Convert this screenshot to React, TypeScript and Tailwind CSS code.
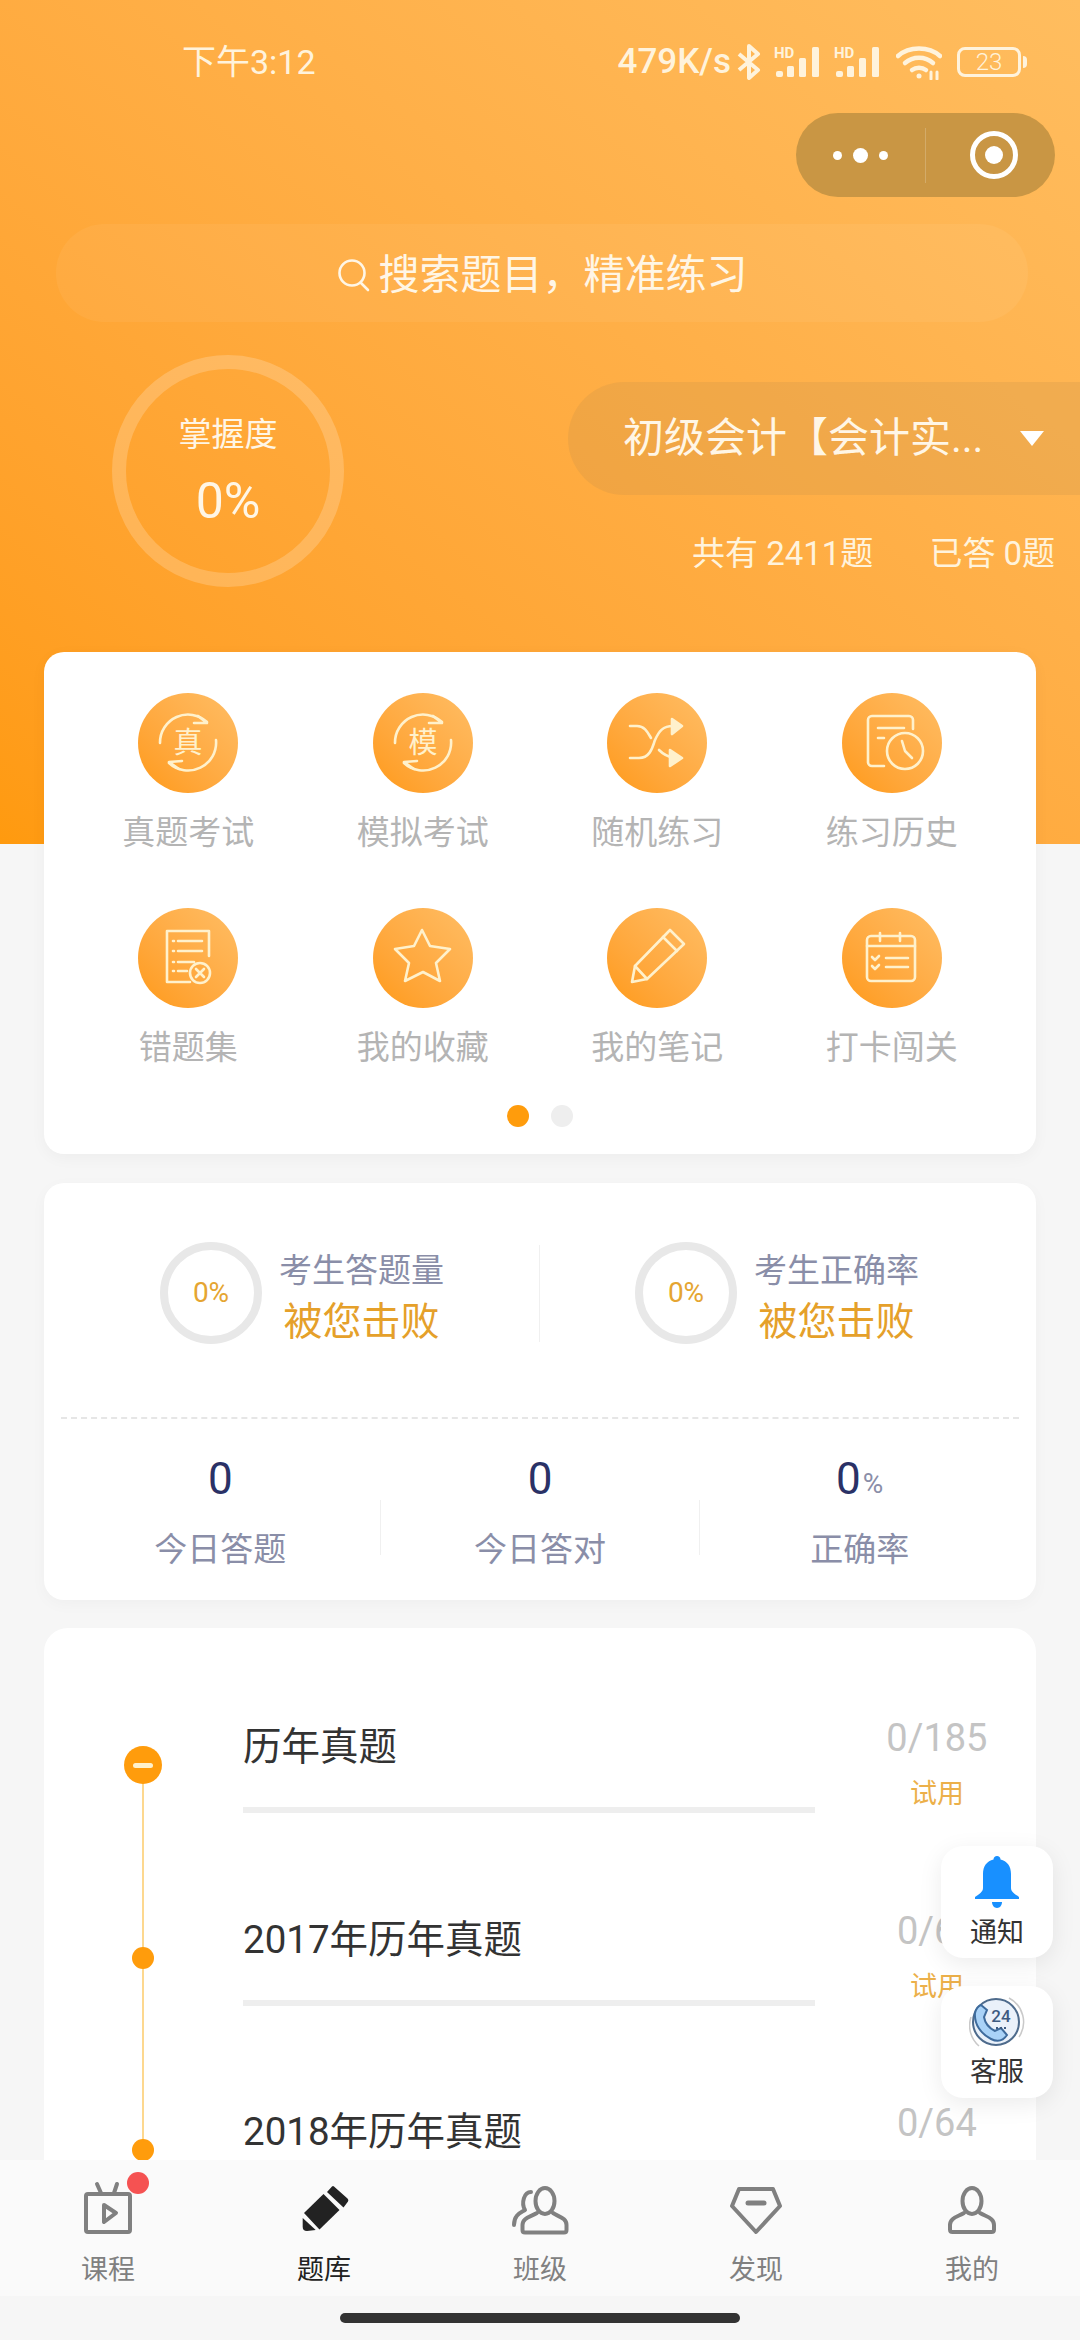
import type { ReactNode } from 'react';

const cream = '#fff1cc';

const IconLine = ({ children }: { children: ReactNode }) => (
	<svg viewBox="0 0 100 100" className="h-[100px] w-[100px]" fill="none" stroke={cream} strokeWidth="2.6" strokeLinecap="round" strokeLinejoin="round">
		{children}
	</svg>
);

const CharCycle = ({ char }: { char: string }) => (
	<IconLine>
		<path d="M22 50A28 28 0 0 1 69 29" />
		<path d="M60 23L69 30L56 30" />
		<path d="M78 47A28 28 0 0 1 31 70" />
		<path d="M41 76L31 69L44 68" />
		<text x="50" y="60" textAnchor="middle" fontSize="29" fill={cream} stroke="none" fontFamily="Noto Sans CJK SC">{char}</text>
	</IconLine>
);

const menu: { label: string; icon: ReactNode }[] = [
	{ label: '真题考试', icon: <CharCycle char="真" /> },
	{ label: '模拟考试', icon: <CharCycle char="模" /> },
	{
		label: '随机练习',
		icon: (
			<IconLine>
				<path d="M23 33H30C38 33 41 40 44 45" />
				<path d="M23 65H32C44 65 46 52 48 47C52 38 56 33 66 33" />
				<path d="M52 57C55 60 58 63 66 64.5" />
				<path d="M65 26L75 33L65 41Z" fill={cream} />
				<path d="M63 57L75 65L63 73Z" fill={cream} />
			</IconLine>
		),
	},
	{
		label: '练习历史',
		icon: (
			<IconLine>
				<path d="M71 36V27A4 4 0 0 0 67 23H30A4 4 0 0 0 26 27V69A4 4 0 0 0 30 73H42" />
				<path d="M36 35H62M36 45H42" />
				<circle cx="63" cy="58" r="18" />
				<path d="M60 48L63 58L70 65" />
			</IconLine>
		),
	},
	{
		label: '错题集',
		icon: (
			<IconLine>
				<path d="M71 48V23H29V74H52" />
				<path d="M35 33H36M40 33H64M35 43H36M40 43H64M35 54H36M40 54H56M35 63H36M40 63H49" />
				<circle cx="62" cy="65" r="10" />
				<path d="M58 61L66 69M66 61L58 69" />
			</IconLine>
		),
	},
	{
		label: '我的收藏',
		icon: (
			<IconLine>
				<path d="M49 22L57 38L77 41L63 55L67 73L50 64L32 73L36 55L22 41L41 38Z" />
			</IconLine>
		),
	},
	{
		label: '我的笔记',
		icon: (
			<IconLine>
				<path d="M63 22L77 36L40 71L25 74L28 58Z" />
				<path d="M28 58L40 71M56 29L70 43" />
			</IconLine>
		),
	},
	{
		label: '打卡闯关',
		icon: (
			<IconLine>
				<rect x="25" y="28" width="48" height="45" rx="4" />
				<path d="M25 38H73M38 25V33M58 25V33" />
				<path d="M30 49L33 52L37 48M30 58L33 61L37 57" />
				<path d="M44 50H66M44 59H66" />
			</IconLine>
		),
	},
];

const Signal = () => (
	<svg viewBox="0 0 49 32" className="h-[32px] w-[49px] overflow-visible" fill="#fff3dc">
		<text x="0" y="12" fontSize="15" fontWeight="700" fontFamily="Roboto">HD</text>
		<rect x="2" y="25" width="7" height="6" rx="2" />
		<rect x="13" y="20" width="7" height="11" rx="1.5" />
		<rect x="25" y="12" width="7" height="19" rx="1.5" />
		<rect x="38" y="1" width="7" height="30" rx="1.5" />
	</svg>
);

const StatusBar = () => (
	<div className="flex h-[113px] items-start justify-between pt-[40px] pl-[182px] pr-[53px] text-[#fff3dc]">
		<span className="text-[34px] leading-[44px]">下午3:12</span>
		<div className="flex h-[44px] items-center">
			<span className="text-[35px] font-medium">479K/s</span>
			<svg viewBox="0 0 26 36" className="ml-[5px] h-[36px] w-[26px]" fill="none" stroke="#fff3dc" strokeWidth="4" strokeLinejoin="round">
				<path d="M3 10L22 26L13 34V2L22 10L3 26" />
			</svg>
			<div className="ml-[12px]"><Signal /></div>
			<div className="ml-[11px]"><Signal /></div>
			<svg viewBox="0 0 46 36" className="ml-[13px] h-[36px] w-[46px]" fill="none" stroke="#fff3dc" strokeWidth="4.5" strokeLinecap="round">
				<path d="M2 12C13 2 33 2 44 12" />
				<path d="M9 19C17 12 29 12 37 19" />
				<path d="M16 26C20 23 26 23 30 26" />
				<circle cx="23" cy="32" r="2.5" fill="#fff3dc" stroke="none" />
				<path d="M35 28V35M41 28V35" strokeWidth="3" />
			</svg>
			<div className="ml-[15px] flex items-center">
				<div className="flex h-[30px] w-[64px] items-center justify-center rounded-[8px] border-[3px] border-[#fff3dc] text-[24px] leading-none font-light">23</div>
				<div className="ml-[2px] h-[12px] w-[4px] rounded-r-full bg-[#fff3dc]" />
			</div>
		</div>
	</div>
);

const Capsule = () => (
	<div className="flex justify-end pr-[25px]">
		<div className="flex h-[84px] w-[259px] items-center rounded-full bg-[#c99644]">
			<div className="flex w-[129px] items-center justify-center gap-[11px]">
				<span className="h-[9px] w-[9px] rounded-full bg-white" />
				<span className="h-[15px] w-[15px] rounded-full bg-white" />
				<span className="h-[9px] w-[9px] rounded-full bg-white" />
			</div>
			<div className="h-[55px] w-px bg-white/20" />
			<div className="flex flex-1 items-center justify-center pl-[6px]">
				<div className="flex h-[48px] w-[48px] items-center justify-center rounded-full border-[5px] border-white">
					<span className="h-[18px] w-[18px] rounded-full bg-white" />
				</div>
			</div>
		</div>
	</div>
);

const Header = () => (
	<div className="h-[844px] bg-linear-to-tr from-[#ff9a0e] to-[#ffbd5f]">
		<StatusBar />
		<Capsule />
		<div className="mt-[27px] ml-[56px] mr-[52px] flex h-[98px] items-center justify-center rounded-full bg-white/5 pt-[4px] text-[#fff6e6]">
			<svg viewBox="0 0 34 34" className="h-[34px] w-[34px]" fill="none" stroke="#fff6e6" strokeWidth="2.6" strokeLinecap="round">
				<circle cx="15" cy="15" r="12.5" />
				<path d="M24 25L31 32" />
			</svg>
			<span className="ml-[8px] text-[41px] leading-none">搜索题目，精准练习</span>
		</div>
		<div className="mt-[33px] flex items-start">
			<div className="ml-[112px] flex h-[232px] w-[232px] flex-col items-center justify-center rounded-full border-[14px] border-white/20 text-[#fff6e6]">
				<span className="text-[33px] leading-[44px]">掌握度</span>
				<span className="mt-[16px] text-[50px] leading-[56px]">0%</span>
			</div>
			<div className="ml-[224px] mt-[27px] flex-1">
				<div className="flex h-[113px] items-center rounded-l-full bg-[#b98a4a]/20 pl-[55px] text-[#fff6e6]">
					<span className="text-[41px] leading-none">初级会计【会计实...</span>
					<span className="ml-[37px] h-0 w-0 border-x-[12px] border-t-[15px] border-x-transparent border-t-white" />
				</div>
				<div className="mt-[40px] flex text-[33px] leading-[38px] text-[#fff3dc]">
					<span className="ml-[124px]">共有 2411题</span>
					<span className="ml-[56px]">已答 0题</span>
				</div>
			</div>
		</div>
	</div>
);

const MenuCard = () => (
	<div className="relative mx-[44px] -mt-[192px] h-[502px] rounded-[20px] bg-white px-[27px] pt-[41px] shadow-[0_4px_16px_rgba(0,0,0,0.04)]">
		<div className="grid grid-cols-4 gap-y-[53px]">
			{menu.map((m) => (
				<div key={m.label} className="flex flex-col items-center">
					<div className="h-[100px] w-[100px] rounded-full bg-linear-to-tr from-[#ff9a12] to-[#ffbd63]">{m.icon}</div>
					<span className="mt-[18px] text-[33px] leading-[44px] text-[#b4b4b4]">{m.label}</span>
				</div>
			))}
		</div>
		<div className="mt-[35px] flex justify-center gap-[22px]">
			<span className="h-[22px] w-[22px] rounded-full bg-[#ff9c0c]" />
			<span className="h-[22px] w-[22px] rounded-full bg-[#eeeeee]" />
		</div>
	</div>
);

const Beat = ({ title, className }: { title: string; className: string }) => (
	<div className={`flex items-center justify-center ${className}`}>
		<div className="flex h-[102px] w-[102px] items-center justify-center rounded-full border-[8px] border-[#e8e8e8] text-[28px] text-[#e5a531]">0%</div>
		<div className="ml-[17px] mt-[10px] flex flex-col items-center">
			<span className="text-[33px] leading-[44px] text-[#8a8ea8]">{title}</span>
			<span className="mt-[4px] text-[39px] leading-[50px] text-[#e5a02a]">被您击败</span>
		</div>
	</div>
);

const Stat = ({ value, label, unit }: { value: string; label: string; unit?: string }) => (
	<div className="flex flex-1 flex-col items-center">
		<div className="flex h-[60px] items-end">
			<span className="text-[44px] leading-[60px] text-[#2a3166]">{value}</span>
			{unit && <span className="mb-[9px] ml-[2px] text-[28px] leading-[32px] text-[#8a8ea8]">{unit}</span>}
		</div>
		<span className="mt-[19px] text-[33px] leading-[44px] text-[#8a8ea8]">{label}</span>
	</div>
);

const StatsCard = () => (
	<div className="mx-[44px] mt-[29px] h-[417px] rounded-[20px] bg-white px-[17px] pt-[59px] shadow-[0_4px_16px_rgba(0,0,0,0.03)]">
		<div className="flex h-[102px] items-center">
			<Beat title="考生答题量" className="w-[478px] pl-[4px]" />
			<div className="h-[97px] w-px bg-[#f0f0f0]" />
			<Beat title="考生正确率" className="flex-1 pr-[5px]" />
		</div>
		<div className="mt-[73px] border-t-2 border-dashed border-[#e6e6e6]" />
		<div className="mt-[30px] flex items-center">
			<Stat value="0" label="今日答题" />
			<div className="mt-[34px] h-[55px] w-px bg-[#f0f0f0]" />
			<Stat value="0" label="今日答对" />
			<div className="mt-[34px] h-[55px] w-px bg-[#f0f0f0]" />
			<Stat value="0" label="正确率" unit="%" />
		</div>
	</div>
);

const Row = ({ title, count, first }: { title: string; count: string; first?: boolean }) => (
	<div className="relative flex h-[192.5px]">
		<div className="absolute top-[45px] left-[98px] h-[192.5px] w-[2px] bg-[#fdd88f]" />
		{first ? (
			<div className="absolute top-[26px] left-[80px] flex h-[38px] w-[38px] items-center justify-center rounded-full bg-[#ff9c0c]">
				<span className="h-[5px] w-[20px] rounded-full bg-[#fff1cc]" />
			</div>
		) : (
			<div className="absolute top-[34px] left-[88px] h-[22px] w-[22px] rounded-full bg-[#ff9c0c]" />
		)}
		<div className="ml-[199px] w-[577px]">
			<div className="text-[38.5px] leading-[54px] text-[#333333]">{title}</div>
			<div className="mt-[33px] h-[6px] bg-[#eeeeee]" />
		</div>
		<div className="ml-[23px] flex w-[200px] flex-col items-center">
			<span className="-mt-[5px] text-[38px] leading-[46px] text-[#c4c4c4]">{count}</span>
			<span className="mt-[15px] text-[27px] leading-[36px] text-[#ecb04a]">试用</span>
		</div>
	</div>
);

const ListCard = () => (
	<div className="mx-[44px] mt-[28px] h-[700px] rounded-[24px] bg-white pt-[92px]">
		<Row title="历年真题" count="0/185" first />
		<Row title="2017年历年真题" count="0/64" />
		<Row title="2018年历年真题" count="0/64" />
	</div>
);

const FloatButtons = () => (
	<div className="absolute top-[1846px] right-[27px] flex flex-col gap-[28px]">
		<div className="flex h-[112px] w-[112px] flex-col items-center rounded-[22px] bg-white pt-[10px] shadow-[0_6px_24px_rgba(0,0,0,0.08)]">
			<svg viewBox="0 0 44 52" className="h-[52px] w-[44px]" fill="#1890ff">
				<path d="M22 0C24 0 25.500 1.500 25.500 3.500C32 5 36 10 36 18V32C36 36 40 38 44 41V43H0V41C4 38 8 36 8 32V18C8 10 12 5 18.500 3.500C18.500 1.500 20 0 22 0Z" />
				<path d="M17 46H27C27 49 25 52 22 52C19 52 17 49 17 46Z" />
			</svg>
			<span className="mt-[5px] text-[27px] leading-[40px] text-[#333333]">通知</span>
		</div>
		<div className="flex h-[112px] w-[112px] flex-col items-center rounded-[22px] bg-white pt-[9px] shadow-[0_6px_24px_rgba(0,0,0,0.08)]">
			<svg viewBox="0 0 56 56" className="h-[56px] w-[56px]" fill="none">
				<circle cx="27" cy="27" r="23" fill="#eaf1fa" stroke="#4e6b8c" strokeWidth="2" />
				<path d="M40 3A27 27 0 0 1 50 42" stroke="#c9c9c9" strokeWidth="1.5" />
				<path d="M10 51A27 27 0 0 1 2 22" stroke="#c9c9c9" strokeWidth="1.500" />
				<path d="M12 10L18 15L15 22C16 28 20 33 26 36L32 33L38 40C34 46 28 47 22 44C12 39 5 29 6 18C7 14 9 11 12 10Z" fill="#a9d2f7" stroke="#3e6b9c" strokeWidth="2" />
				<text x="32" y="27" textAnchor="middle" fontSize="17" fontWeight="500" fontFamily="Roboto" fill="#3d5a80">24</text>
				<path d="M27 33H37" stroke="#3d5a80" strokeWidth="2" strokeDasharray="2 2" />
			</svg>
			<span className="mt-[1px] text-[27px] leading-[40px] text-[#333333]">客服</span>
		</div>
	</div>
);

const navIcon = { fill: 'none', stroke: '#808080', strokeWidth: 4, strokeLinejoin: 'round' as const, strokeLinecap: 'round' as const };

const tabs: { label: string; active?: boolean; icon: ReactNode }[] = [
	{
		label: '课程',
		icon: (
			<svg viewBox="0 0 60 60" className="h-[60px] w-[60px]" {...navIcon}>
				<rect x="8" y="14" width="44" height="38" rx="2" />
				<path d="M19 4L23 13M39 4L36 13" />
				<path d="M26 25L38 33L26 42Z" />
			</svg>
		),
	},
	{
		label: '题库',
		active: true,
		icon: (
			<svg viewBox="0 0 60 60" className="h-[60px] w-[60px]" fill="#222222">
				<path d="M33 12L38 6.500Q39 5.500 40 6.500L53.500 18.500Q55 20 54 21.500L49.500 27.500Z" />
				<path d="M29.500 14L45.500 30L25.500 49.500L10 33Z" />
				<path d="M8.700 38L21.700 50L13 51Q8.700 51 8.700 47Z" />
			</svg>
		),
	},
	{
		label: '班级',
		icon: (
			<svg viewBox="0 0 60 60" className="h-[60px] w-[60px]" {...navIcon}>
				<ellipse cx="35" cy="21" rx="9.500" ry="13" />
				<path d="M27 33C20 37 12.500 38 12.500 45V50Q12.500 52.500 15 52.500H54Q56.500 52.500 56.500 50V45C56.500 38 49 37 43 33" />
				<path d="M21 12C14 12 11 23 15 30C10 33 4 35 4 45" />
			</svg>
		),
	},
	{
		label: '发现',
		icon: (
			<svg viewBox="0 0 60 60" className="h-[60px] w-[60px]" {...navIcon}>
				<path d="M13 9H47L54 26L30 52L6 26Z" />
				<path d="M22 23H38" strokeWidth="5" />
			</svg>
		),
	},
	{
		label: '我的',
		icon: (
			<svg viewBox="0 0 60 60" className="h-[60px] w-[60px]" {...navIcon}>
				<ellipse cx="30" cy="21" rx="9.500" ry="13" />
				<path d="M22 33C15 37 8 38 8 45V49.500Q8 52 10.500 52H49.500Q52 52 52 49.500V45C52 38 45 37 38 33" />
			</svg>
		),
	},
];

const BottomNav = () => (
	<div className="absolute inset-x-0 bottom-0 bg-[#f6f6f6]">
		<div className="grid h-[136px] grid-cols-5 bg-[#fafafa]">
			{tabs.map((t) => (
				<div key={t.label} className="relative flex flex-col items-center pt-[20px]">
					{t.icon}
					{t.label === '课程' && <span className="absolute top-[12px] left-[127px] h-[22px] w-[22px] rounded-full bg-[#f55252]" />}
					<span className={`mt-[10px] text-[27px] leading-[40px] ${t.active ? 'text-[#222222]' : 'text-[#808080]'}`}>{t.label}</span>
				</div>
			))}
		</div>
		<div className="flex h-[44px] justify-center pt-[17px]">
			<div className="h-[10px] w-[400px] rounded-full bg-[#333333]" />
		</div>
	</div>
);

export default function App() {
	return (
		<div className="relative h-[2340px] w-[1080px] overflow-hidden bg-[#f6f6f6] font-[Roboto,'Noto_Sans_CJK_SC',sans-serif]">
			<Header />
			<MenuCard />
			<StatsCard />
			<ListCard />
			<FloatButtons />
			<BottomNav />
		</div>
	);
}
